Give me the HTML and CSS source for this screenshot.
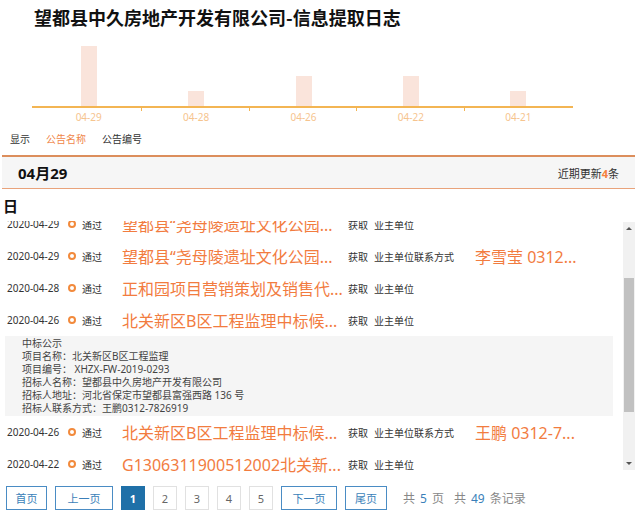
FILE: index.html
```html
<!DOCTYPE html>
<html lang="zh-CN">
<head>
<meta charset="utf-8">
<title>信息提取日志</title>
<link rel="stylesheet" href="styles.css">
</head>
<body>
<div class="page">
  <h1 class="title">望都县中久房地产开发有限公司-信息提取日志</h1>

  <div class="chart">
    <div class="bars">
      <div class="col"><div class="bar" style="height:60px"></div></div>
      <div class="col"><div class="bar" style="height:15px"></div></div>
      <div class="col"><div class="bar" style="height:30px"></div></div>
      <div class="col"><div class="bar" style="height:30px"></div></div>
      <div class="col"><div class="bar" style="height:15px"></div></div>
    </div>
    <div class="labels">
      <div class="lab"><span class="tick"></span><span class="lab-text">04-29</span></div>
      <div class="lab"><span class="tick"></span><span class="lab-text">04-28</span></div>
      <div class="lab"><span class="tick"></span><span class="lab-text">04-26</span></div>
      <div class="lab"><span class="tick"></span><span class="lab-text">04-22</span></div>
      <div class="lab last"><span class="tick"></span><span class="lab-text">04-21</span></div>
    </div>
  </div>

  <div class="tabs">
    <span class="tab">显示</span>
    <span class="tab active">公告名称</span>
    <span class="tab">公告编号</span>
  </div>

  <div class="day-head">
    <span class="day-date">04月29</span>
    <span class="day-count">近期更新<em>4</em>条</span>
  </div>
  <div class="day-wrap">日</div>

  <div class="list-box">
    <div class="list-view">
      <div class="list-inner">
        <div class="row">
          <span class="c-date">2020-04-29</span><span class="dot"></span><span class="c-state">通过</span>
          <span class="c-title">望都县“尧母陵遗址文化公园...</span>
          <span class="c-act">获取</span><span class="c-field">业主单位</span>
        </div>
        <div class="row">
          <span class="c-date">2020-04-29</span><span class="dot"></span><span class="c-state">通过</span>
          <span class="c-title">望都县“尧母陵遗址文化公园...</span>
          <span class="c-act">获取</span><span class="c-field">业主单位联系方式</span>
          <span class="c-value">李雪莹 0312...</span>
        </div>
        <div class="row">
          <span class="c-date">2020-04-28</span><span class="dot"></span><span class="c-state">通过</span>
          <span class="c-title">正和园项目营销策划及销售代...</span>
          <span class="c-act">获取</span><span class="c-field">业主单位</span>
        </div>
        <div class="row">
          <span class="c-date">2020-04-26</span><span class="dot"></span><span class="c-state">通过</span>
          <span class="c-title">北关新区B区工程监理中标候...</span>
          <span class="c-act">获取</span><span class="c-field">业主单位</span>
        </div>
        <div class="detail">
          <p>中标公示</p>
          <p>项目名称：北关新区B区工程监理</p>
          <p>项目编号： XHZX-FW-2019-0293</p>
          <p>招标人名称：望都县中久房地产开发有限公司</p>
          <p>招标人地址：河北省保定市望都县富强西路 136 号</p>
          <p>招标人联系方式：王鹏0312-7826919</p>
        </div>
        <div class="row">
          <span class="c-date">2020-04-26</span><span class="dot"></span><span class="c-state">通过</span>
          <span class="c-title">北关新区B区工程监理中标候...</span>
          <span class="c-act">获取</span><span class="c-field">业主单位联系方式</span>
          <span class="c-value">王鹏 0312-7...</span>
        </div>
        <div class="row">
          <span class="c-date">2020-04-22</span><span class="dot"></span><span class="c-state">通过</span>
          <span class="c-title">G1306311900512002北关新...</span>
          <span class="c-act">获取</span><span class="c-field">业主单位</span>
        </div>
      </div>
    </div>
    <div class="scrollbar">
      <span class="arrow up"></span>
      <div class="track"><div class="thumb"></div></div>
      <span class="arrow down"></span>
    </div>
  </div>

  <div class="pager">
    <a class="pbtn nav w41">首页</a>
    <a class="pbtn nav w58">上一页</a>
    <a class="pbtn num current">1</a>
    <a class="pbtn num">2</a>
    <a class="pbtn num">3</a>
    <a class="pbtn num">4</a>
    <a class="pbtn num">5</a>
    <a class="pbtn nav w56">下一页</a>
    <a class="pbtn nav w42">尾页</a>
    <span class="ptotal">共<b>5</b>页<span class="sp"></span>共<b>49</b>条记录</span>
  </div>
</div>
</body>
</html>
```

FILE: styles.css
```css
* { box-sizing: border-box; }
html, body { margin: 0; padding: 0; background: #fff; }
body {
  font-family: "Noto Sans", "Noto Sans CJK SC", sans-serif;
  color: #333;
  width: 640px;
  height: 516px;
  overflow: hidden;
}
.page { width: 640px; }

.title {
  margin: 0;
  height: 40px;
  padding: 6px 0 0 34px;
  font-size: 18px;
  line-height: 22px;
  font-weight: 700;
  color: #111;
  font-family: "Noto Sans CJK SC", sans-serif;
}

.chart { margin-left: 32px; width: 541px; }
.bars {
  display: flex;
  align-items: flex-end;
  height: 68px;
  padding: 0 1px 0 3px;
  border-bottom: 2px solid #f3b553;
}
.col { flex: 1; display: flex; justify-content: center; }
.bar { width: 16px; background: #fae4db; }
.labels { display: flex; padding: 0 1px 0 3px; }
.lab { flex: 1; display: flex; flex-direction: column; align-items: center; }
.tick { align-self: stretch; height: 3px; border-right: 1px solid #f3b553; }
.lab.last .tick { border-right: none; }
.lab-text { font-size: 10px; line-height: 12px; color: #f6c48e; }

.tabs {
  display: flex;
  gap: 16px;
  padding-left: 10px;
  margin-top: 9px;
  font-size: 10px;
  line-height: 14px;
  color: #333;
}
.tab.active { color: #f0874a; }

.day-head {
  margin: 9px 5px 0 2px;
  height: 34px;
  border-top: 2px solid #dc8e5c;
  border-bottom: 1px solid #e9a37b;
  background: #f6f6f6;
  display: flex;
  align-items: center;
  justify-content: space-between;
  padding: 0 16px;
}
.day-date { font-size: 15px; font-weight: 700; color: #111; }
.day-count { font-size: 11px; color: #333; }
.day-count em { font-style: normal; color: #f5803e; font-weight: 700; }

.day-wrap {
  margin-top: 9px;
  padding-left: 3px;
  font-size: 15px;
  line-height: 16px;
  font-weight: 700;
  color: #111;
  font-family: "Noto Sans CJK SC", sans-serif;
}

.list-box { display: flex; margin-top: 7px; height: 257px; }
.list-view { width: 623px; height: 257px; overflow: hidden; }
.list-inner { margin-top: -13px; }

.row {
  height: 32px;
  display: flex;
  align-items: center;
  padding-left: 7px;
  white-space: nowrap;
  font-size: 10px;
  color: #333;
}
.c-date { width: 61px; }
.dot {
  width: 8px; height: 8px;
  border: 2px solid #f28a3c;
  border-radius: 50%;
  margin-right: 6px;
}
.c-state { width: 40px; }
.c-title {
  width: 226px;
  overflow: hidden;
  font-size: 16px;
  color: #f27c3f;
}
.c-act { width: 26px; }
.c-field { width: 101px; }
.c-value { font-size: 16px; color: #f27c3f; }

.detail {
  margin-left: 5px;
  width: 608px;
  background: #f5f5f5;
  padding: 1px 0 1px 17px;
}
.detail p {
  margin: 0;
  font-size: 10px;
  line-height: 13px;
  color: #444;
}

.scrollbar {
  width: 12px;
  margin-top: 1px;
  height: 248px;
  background: #f1f1f1;
  display: flex;
  flex-direction: column;
  align-items: center;
}
.arrow {
  width: 0; height: 0;
  border-left: 3px solid transparent;
  border-right: 3px solid transparent;
  margin: 5px 0;
}
.arrow.up { border-bottom: 3px solid #555; }
.arrow.down { border-top: 3px solid #555; }
.track { flex: 1; width: 100%; padding: 0 1px; }
.thumb { margin-top: 43px; height: 134px; background: #c1c1c1; }

.pager {
  display: flex;
  align-items: center;
  gap: 8px;
  margin-top: 8px;
  padding-left: 6px;
}
.pbtn {
  height: 24px;
  display: flex;
  align-items: center;
  justify-content: center;
  font-size: 11px;
  border: 1px solid #e1e1e1;
  color: #666;
  font-family: "Noto Sans CJK SC", "Noto Sans", sans-serif;
}
.pbtn.num { width: 24px; font-family: "Noto Sans", sans-serif; }
.pbtn.nav { border-color: #4a8cc4; color: #3b7fb9; }
.pbtn.current { background: #1f70a8; border-color: #1f70a8; color: #fff; font-weight: 700; }
.w41 { width: 41px; }
.w58 { width: 58px; }
.w56 { width: 56px; }
.w42 { width: 42px; }
.ptotal {
  margin-left: 8px;
  font-size: 12px;
  color: #888;
  white-space: nowrap;
}
.ptotal b { font-weight: 400; color: #3b7fb9; margin: 0 5px; }
.sp { display: inline-block; width: 10px; }
```
